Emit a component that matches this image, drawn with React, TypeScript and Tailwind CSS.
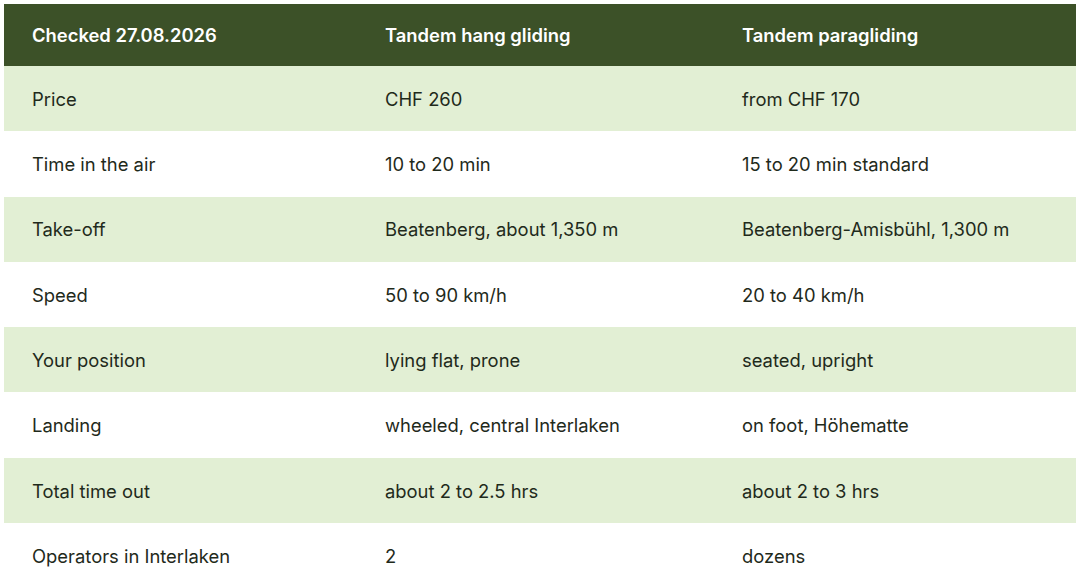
const rows: [string, string, string][] = [
  ["Price", "CHF 260", "from CHF 170"],
  ["Time in the air", "10 to 20 min", "15 to 20 min standard"],
  ["Take-off", "Beatenberg, about 1,350 m", "Beatenberg-Amisbühl, 1,300 m"],
  ["Speed", "50 to 90 km/h", "20 to 40 km/h"],
  ["Your position", "lying flat, prone", "seated, upright"],
  ["Landing", "wheeled, central Interlaken", "on foot, Höhematte"],
  ["Total time out", "about 2 to 2.5 hrs", "about 2 to 3 hrs"],
  ["Operators in Interlaken", "2", "dozens"],
];

export default function App() {
  return (
    <div className="bg-white p-[4px] font-['Inter',sans-serif] text-[18.4px]">
      <table className="w-[1072px] table-fixed border-collapse">
        <colgroup>
          <col className="w-[381px]" />
          <col className="w-[357px]" />
          <col className="w-[334px]" />
        </colgroup>
        <thead>
          <tr className="h-[62px] bg-[#3c5128] text-white">
            <th className="pl-[28px] pt-[1px] text-left font-semibold">Checked 27.08.2026</th>
            <th className="pt-[1px] text-left font-semibold">Tandem hang gliding</th>
            <th className="pt-[1px] text-left font-semibold">Tandem paragliding</th>
          </tr>
        </thead>
        <tbody className="text-[#1f2a1b]">
          {rows.map((r, i) => (
            <tr key={i} className={i % 2 === 0 ? "h-[65.3px] bg-[#e2efd4]" : "h-[65.3px] bg-white"}>
              <td className="pl-[28px] pt-[2px]">{r[0]}</td>
              <td className="pt-[2px]">{r[1]}</td>
              <td className="pt-[2px]">{r[2]}</td>
            </tr>
          ))}
        </tbody>
      </table>
    </div>
  );
}
